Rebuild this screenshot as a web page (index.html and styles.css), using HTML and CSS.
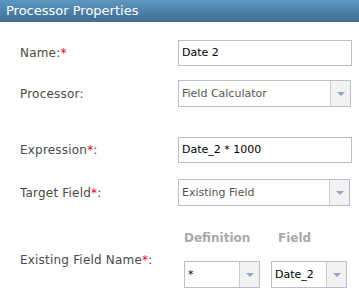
FILE: index.html
```html
<!DOCTYPE html>
<html lang="en">

<head>
    <meta charset="UTF-8">
    <title>Processor Properties</title>
    <link rel="stylesheet" href="styles.css">
</head>

<body>
    <!-- Dialog title -->
    <div class="title-bar">Processor Properties</div>

    <!-- Properties form -->
    <div class="form">
        <div class="row row-name">
            <label class="field-label">Name:<span class="req">*</span></label>
            <div class="input">Date 2</div>
        </div>

        <div class="row row-processor">
            <label class="field-label">Processor:</label>
            <div class="select">
                <span class="select-text">Field Calculator</span>
                <span class="select-arrow"></span>
            </div>
        </div>

        <div class="row row-expression">
            <label class="field-label">Expression<span class="req">*</span>:</label>
            <div class="input">Date_2 * 1000</div>
        </div>

        <div class="row row-target">
            <label class="field-label">Target Field<span class="req">*</span>:</label>
            <div class="select select-target">
                <span class="select-text">Existing Field</span>
                <span class="select-arrow"></span>
            </div>
        </div>

        <div class="row row-existing">
            <label class="field-label">Existing Field Name<span class="req">*</span>:</label>
            <div class="sub-grid">
                <div class="sub-head">Definition</div>
                <div class="sub-head sub-head-field">Field</div>
                <div class="select select-small">
                    <span class="select-text dark">*</span>
                    <span class="select-arrow"></span>
                </div>
                <div class="select select-small">
                    <span class="select-text dark">Date_2</span>
                    <span class="select-arrow"></span>
                </div>
            </div>
        </div>
    </div>
</body>

</html>
```

FILE: styles.css
```css
/* Global Styles */
* {
    margin: 0;
    padding: 0;
    box-sizing: border-box;
}

body {
    background-color: #fff;
    font-family: 'DejaVu Sans', sans-serif;
    width: 359px;
    height: 293px;
    overflow: hidden;
}

/* Title bar */
.title-bar {
    height: 22px;
    line-height: 22px;
    padding-left: 6px;
    color: #fff;
    font-size: 13px;
    background: linear-gradient(#5d97c0, #3e6d92);
}

/* Form */
.form {
    padding: 18px 0 0 20px;
}

.row {
    display: flex;
    align-items: center;
}

.field-label {
    width: 158px;
    font-size: 12px;
    letter-spacing: 0.2px;
    color: #4a4a4a;
}

.req {
    color: #e8001c;
}

.row-processor {
    margin-top: 14px;
}

.row-expression {
    margin-top: 30px;
}

.row-target {
    margin-top: 16px;
}

.row-existing {
    margin-top: 25px;
}

.input {
    width: 174px;
    height: 26px;
    border: 1px solid #b8c0cc;
    padding-left: 3px;
    font-size: 11px;
    line-height: 24px;
    color: #000;
}

.select {
    width: 173px;
    height: 27px;
    border: 1px solid #b8c0cc;
    display: flex;
}

.select-target {
    width: 172px;
}

.select-text {
    flex: 1;
    padding-left: 3px;
    font-size: 11px;
    line-height: 25px;
    color: #555;
}

.select-text.dark {
    color: #000;
}

.select-arrow {
    width: 20px;
    border-left: 1px solid #c8cdd5;
    background-color: #f2f2f2;
    position: relative;
}

.select-arrow::after {
    content: '';
    position: absolute;
    left: 6px;
    top: 11px;
    border-left: 4px solid transparent;
    border-right: 4px solid transparent;
    border-top: 4px solid #8fa8c8;
}

/* Definition / Field pair */
.sub-grid {
    display: grid;
    grid-template-columns: 76px 76px;
    column-gap: 11px;
    row-gap: 15px;
    padding-left: 6px;
}

.sub-head {
    font-size: 12px;
    font-weight: bold;
    color: #a9a9a9;
    height: 15px;
    line-height: 15px;
}

.sub-head-field {
    padding-left: 7px;
}

.select-small {
    width: 76px;
    height: 27px;
}
```
